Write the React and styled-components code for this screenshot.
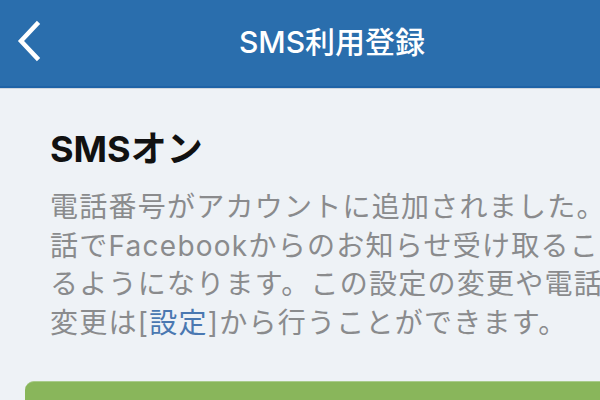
import React from "react";
import styled, { createGlobalStyle } from "styled-components";

const Global = createGlobalStyle`
  html, body { margin: 0; padding: 0; background: #eef2f6; overflow: hidden; }
  body { font-family: "Inter", "Noto Sans CJK JP", sans-serif; }
`;

const Page = styled.div`
  width: 664px;
  min-height: 400px;
  background: #eef2f6;
`;

const Header = styled.header`
  height: 86px;
  background: #2a6ead;
  border-bottom: 2px solid #1f63a6;
  box-shadow: 0 1px 0 #cfd6de;
  display: grid;
  grid-template-columns: 1fr auto 1fr;
  align-items: center;
`;

const Back = styled.button`
  justify-self: start;
  margin-left: 14px;
  padding: 0;
  border: none;
  background: none;
  display: flex;
  align-items: center;
  cursor: pointer;
  transform: translateY(-2px);
`;

const Title = styled.h1`
  margin: 0;
  color: #ffffff;
  font-family: "Inter", "Noto Sans CJK JP", sans-serif;
  font-weight: 500;
  font-size: 30px;
  letter-spacing: 0;
  transform: translateY(-3px);
`;

const Content = styled.main`
  padding: 39px 0 0 50px;
`;

const Heading = styled.h2`
  margin: 0 0 17px;
  color: #111;
  font-family: "Inter", "Noto Sans CJK JP", sans-serif;
  font-weight: 700;
  font-size: 36px;
  line-height: 44px;
`;

const Body = styled.p`
  margin: 0;
  color: #8a8b8d;
  font-family: "Inter", "Noto Sans CJK JP", sans-serif;
  font-size: 28px;
  line-height: 38.7px;
  letter-spacing: 1.25px;
`;

const Line = styled.span`
  display: block;
  white-space: nowrap;
`;

const Link = styled.a`
  color: #4a78b1;
  text-decoration: none;
`;

const GreenButton = styled.button`
  display: block;
  margin: 38px 0 0 25px;
  width: 700px;
  height: 60px;
  border: none;
  border-top: 1px solid #a9cb8b;
  border-radius: 9px;
  background: #89b65b;
`;

export default function App() {
  return (
    <Page>
      <Global />
      <Header>
        <Back aria-label="戻る">
          <svg width="30" height="46" viewBox="0 0 30 46">
            <polyline
              points="23,6 7,23 23,40"
              fill="none"
              stroke="#ffffff"
              strokeWidth="4.5"
              strokeLinecap="square"
              strokeLinejoin="miter"
            />
          </svg>
        </Back>
        <Title>SMS利用登録</Title>
        <div />
      </Header>
      <Content>
        <Heading>SMSオン</Heading>
        <Body>
          <Line>電話番号がアカウントに追加されました。電</Line>
          <Line>話でFacebookからのお知らせ受け取ることができ</Line>
          <Line>るようになります。この設定の変更や電話番号の</Line>
          <Line>
            変更は[<Link href="#">設定</Link>]から行うことができます。
          </Line>
        </Body>
      </Content>
      <GreenButton aria-label="次へ" />
    </Page>
  );
}
